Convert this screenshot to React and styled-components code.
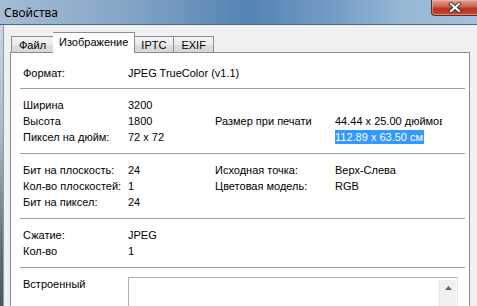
import React from "react";
import styled, { createGlobalStyle } from "styled-components";

const GlobalStyle = createGlobalStyle`
  html, body {
    margin: 0;
    padding: 0;
    background: #f0f0f0;
  }
  body {
    font-family: "Liberation Sans", Arial, sans-serif;
    font-size: 11px;
    color: #000;
  }
`;

const Window = styled.div`
  width: 477px;
  height: 306px;
  overflow: hidden;
  display: flex;
  flex-direction: column;
  background: #f0f0f0;
`;

const TitleBar = styled.div`
  height: 24px;
  flex: none;
  display: flex;
  align-items: center;
  border-bottom: 1px solid #4a6886;
  background: linear-gradient(
    to right,
    #a6bdd5 0%,
    #86a6c7 25%,
    #5484b3 52%,
    #6f99c2 68%,
    #97b7d5 84%,
    #a3c0dc 100%
  );
`;

const Title = styled.span`
  padding-left: 4px;
  font-family: "Noto Sans", "Open Sans", sans-serif;
  font-size: 12px;
  color: #000;
`;

const CloseButton = styled.div`
  margin-left: auto;
  margin-right: -2px;
  align-self: flex-start;
  width: 46px;
  height: 15px;
  display: flex;
  align-items: center;
  justify-content: center;
  border: 1px solid #5f2a22;
  border-top: none;
  border-radius: 0 0 0 4px;
  background: linear-gradient(#e0a195 0%, #cf6a58 40%, #b8301c 60%, #cb4a2c 100%);
  box-shadow: inset 0 0 0 1px rgba(255, 200, 190, 0.45);
`;

const Main = styled.div`
  flex: 1;
  display: flex;
  min-height: 0;
`;

const Frame = styled.div`
  width: 3px;
  flex: none;
  border-right: 1px solid #8c9aa8;
  background: linear-gradient(#c9d5e0 0%, #aab6c2 40%, #6c757e 75%, #4d545b 100%);
`;

const Body = styled.div`
  flex: 1;
  padding: 7px 7px 0 6px;
  display: flex;
  flex-direction: column;
`;

const TabRow = styled.div`
  display: flex;
  align-items: flex-end;
  height: 21px;
  margin-left: 1px;
  margin-bottom: -1px;
`;

const Tab = styled.div`
  position: relative;
  box-sizing: border-box;
  display: flex;
  align-items: center;
  justify-content: center;
  border: 1px solid #898c95;
  border-bottom: none;
  ${({ $active }) =>
    $active
      ? `
    z-index: 1;
    height: 21px;
    margin: 0 -1px;
    padding: 0 6px 3px;
    background: #fff;
  `
      : `
    height: 16px;
    margin-bottom: 1px;
    padding: 1px 7px 0;
    background: linear-gradient(#f3f3f3 0%, #ebebeb 50%, #dddddd 51%, #d7d7d7 100%);
    & + & { border-left: none; }
  `}
`;

const Panel = styled.div`
  flex: 1;
  border: 1px solid #898c95;
  border-bottom: none;
  background: #fff;
`;

// four columns: label, value, right label, right value (clipped like the original)
const Group = styled.div`
  display: grid;
  grid-template-columns: 105px 87px 120px 107px;
  grid-auto-rows: 16px;
  align-items: center;
  padding: ${({ $first }) => ($first ? "12px 0 7px 12px" : "8px 0 8px 12px")};
  white-space: nowrap;
`;

const Cell = styled.span`
  overflow: hidden;
  grid-column: ${({ $col }) => $col || "auto"};
`;

const Selected = styled.span`
  display: inline-block;
  margin-left: -1px;
  padding-right: 1px;
  border-left: 1px solid #1a1a1a;
  line-height: 14px;
  background: #3399ff;
  color: #fff;
`;

const Separator = styled.div`
  height: 1px;
  margin: 0 4px 0 9px;
  background: #a0a0a0;
`;

const EmbedGroup = styled.div`
  display: grid;
  grid-template-columns: 105px 330px;
  align-items: start;
  padding: 8px 0 0 12px;
`;

const EmbedLabel = styled.span`
  line-height: 16px;
`;

const TextBox = styled.div`
  margin-top: 1px;
  height: 60px;
  border: 1px solid #abadb3;
  border-right-color: #dbdfe6;
  display: flex;
  justify-content: flex-end;
  padding: 2px 1px 0 0;
`;

const ScrollBar = styled.div`
  width: 16px;
  background: #f0f0f0;
  border-left: 1px solid #e6e6e6;
  display: flex;
  justify-content: center;
  padding-top: 6px;
`;

export default function App() {
  return (
    <>
      <GlobalStyle />
      <Window>
        <TitleBar>
          <Title>Свойства</Title>
          <CloseButton>
            <svg width="14" height="11" viewBox="0 0 14 11">
              <path
                d="M3 2 L11 9 M11 2 L3 9"
                stroke="#3a3a3a"
                strokeWidth="4"
                strokeLinecap="square"
              />
              <path
                d="M3 2 L11 9 M11 2 L3 9"
                stroke="#ffffff"
                strokeWidth="2"
                strokeLinecap="square"
              />
            </svg>
          </CloseButton>
        </TitleBar>
        <Main>
          <Frame />
          <Body>
            <TabRow>
              <Tab>Файл</Tab>
              <Tab $active>Изображение</Tab>
              <Tab>IPTC</Tab>
              <Tab>EXIF</Tab>
            </TabRow>
            <Panel>
              <Group $first>
                <Cell>Формат:</Cell>
                <Cell $col="2 / 5">JPEG TrueColor (v1.1)</Cell>
              </Group>
              <Separator />
              <Group>
                <Cell $col="1">Ширина</Cell>
                <Cell $col="2 / 5">3200</Cell>
                <Cell>Высота</Cell>
                <Cell>1800</Cell>
                <Cell>Размер при печати</Cell>
                <Cell>44.44 x 25.00 дюймов</Cell>
                <Cell>Пиксел на дюйм:</Cell>
                <Cell>72 x 72</Cell>
                <Cell />
                <Cell>
                  <Selected>112.89 x 63.50 см</Selected>
                </Cell>
              </Group>
              <Separator />
              <Group>
                <Cell>Бит на плоскость:</Cell>
                <Cell>24</Cell>
                <Cell>Исходная точка:</Cell>
                <Cell>Верх-Слева</Cell>
                <Cell>Кол-во плоскостей:</Cell>
                <Cell>1</Cell>
                <Cell>Цветовая модель:</Cell>
                <Cell>RGB</Cell>
                <Cell>Бит на пиксел:</Cell>
                <Cell $col="2 / 5">24</Cell>
              </Group>
              <Separator />
              <Group>
                <Cell>Сжатие:</Cell>
                <Cell $col="2 / 5">JPEG</Cell>
                <Cell>Кол-во</Cell>
                <Cell $col="2 / 5">1</Cell>
              </Group>
              <Separator />
              <EmbedGroup>
                <EmbedLabel>Встроенный</EmbedLabel>
                <TextBox>
                  <ScrollBar>
                    <svg width="7" height="4" viewBox="0 0 7 4">
                      <path d="M3.5 0 L7 4 L0 4 Z" fill="#606060" />
                    </svg>
                  </ScrollBar>
                </TextBox>
              </EmbedGroup>
            </Panel>
          </Body>
        </Main>
      </Window>
    </>
  );
}
